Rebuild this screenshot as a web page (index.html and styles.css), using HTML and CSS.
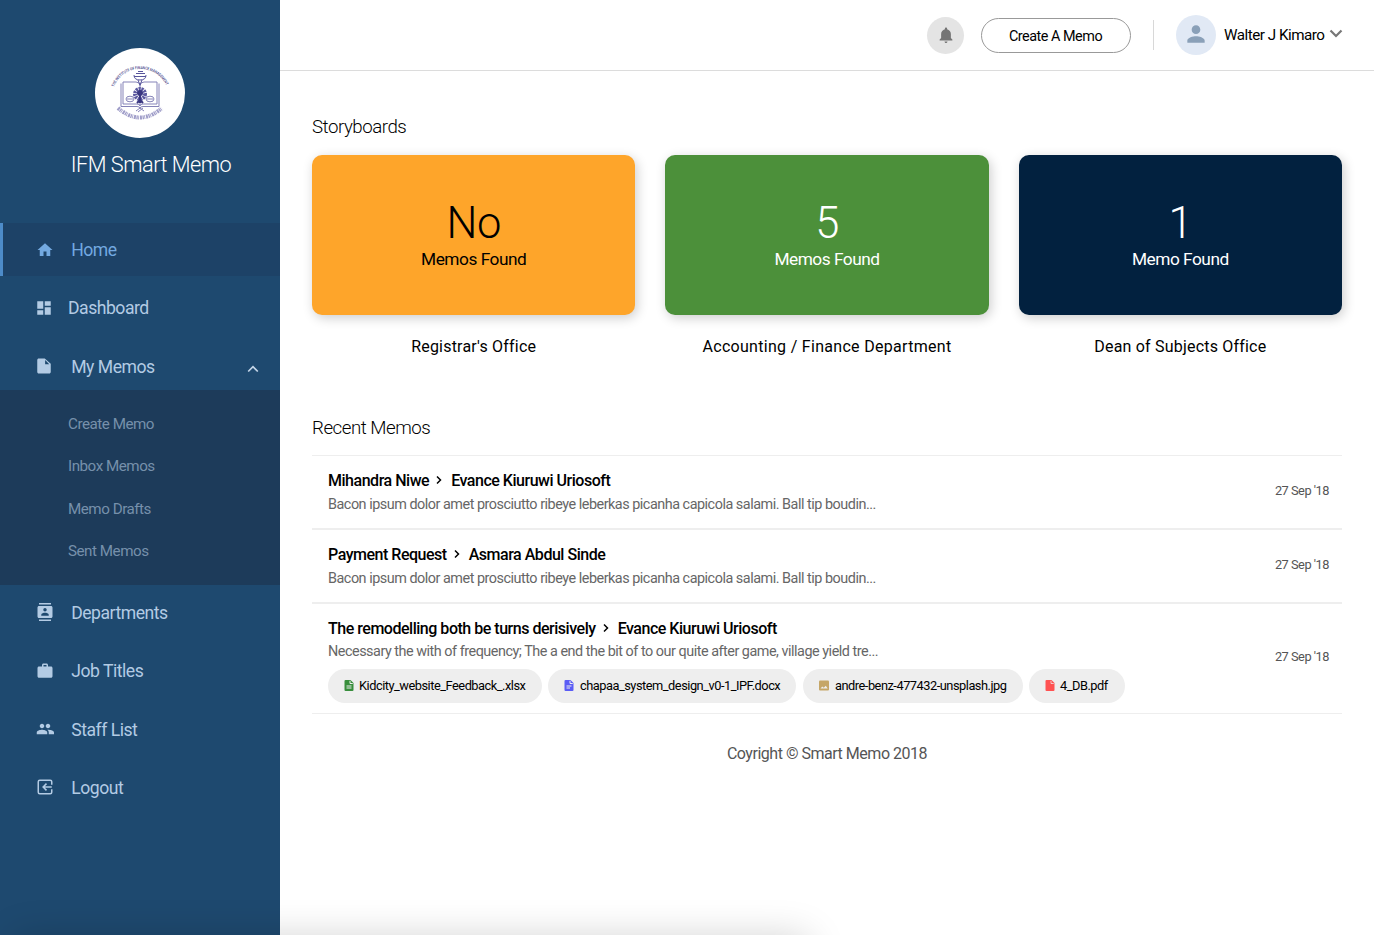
FILE: index.html
```html
<!DOCTYPE html>
<html lang="en">
<head>
<meta charset="utf-8">
<title>IFM Smart Memo</title>
<link rel="stylesheet" href="styles.css">
</head>
<body>
<div class="app">
  <aside class="sidebar">
    <div class="brand">
      <div class="logo">
        <svg width="80" height="80" viewBox="0 0 80 80" fill="none" stroke="#57549b">
          <defs><path id="arc" d="M14 34C23 10 57 10 67 34"/></defs>
          <text class="logo-text"><textPath href="#arc" textLength="66" lengthAdjust="spacingAndGlyphs">THE INSTITUTE OF FINANCE MANAGEMENT</textPath></text>
          <g stroke="#8583b8" stroke-width="1">
            <path d="M21 30.500V53.500h16q3 0 3 2 0-2 3-2h16V30.500"/>
            <path d="M23 29v22h14q3 0 3 2 0-2 3-2h14V29H44q-4 0-4 4 0-4-4-4z"/>
            <path d="M40 33v20"/>
            <ellipse cx="30" cy="46" rx="4" ry="2.800"/><ellipse cx="50" cy="46" rx="4" ry="2.800"/>
            <path d="M27 46h6M47 46h6M36 58l4-3 4 3M38 59l5-4"/>
          </g>
          <path d="M36 20.500h9M34 23.500h12M38 18.500h5M34 22q0 5 6 5t6-5M38 27l2 5 2-5" stroke-width="1"/>
          <circle cx="40" cy="41" r="5" stroke-width="4" stroke-dasharray="2 .7" stroke="#5b58a0"/>
          <circle cx="40" cy="40" r="3" fill="#393681" stroke="none"/>
          <path d="M40 41v9M37 50l3-3 3 3" stroke="#393681" stroke-width="2"/>
          <path d="M18 55Q40 74 62 55" stroke="#a09ec9" stroke-width="4" stroke-dasharray="2 .6 1.300 .5 .8 .9"/>
        </svg>
      </div>
      <h1 class="brand-name">IFM Smart Memo</h1>
    </div>
    <nav class="nav">
      <a class="item active"><svg class="ico" viewBox="0 0 24 24"><path d="M10 20v-6h4v6h5v-8h3L12 3 2 12h3v8z"/></svg><span>Home</span></a>
      <a class="item dash"><svg class="ico" viewBox="0 0 24 24"><path d="M3 13h8V3H3v10zm0 8h8v-6H3v6zm10 0h8V11h-8v10zm0-18v6h8V3h-8z"/></svg><span>Dashboard</span></a>
      <a class="item memos"><svg class="ico" viewBox="0 0 24 24"><path d="M13 2H5C3.900 2 3 2.900 3 4v16c0 1.100.9 2 2 2h14c1.100 0 2-.9 2-2V9zM13.500 9.500V4L19 9.500z"/></svg><span>My Memos</span><svg class="caret" viewBox="0 0 12 8"><path d="M1.200 6.500 6 1.700l4.800 4.800"/></svg></a>
      <div class="submenu">
        <a>Create Memo</a><a>Inbox Memos</a><a>Memo Drafts</a><a>Sent Memos</a>
      </div>
      <a class="item"><svg class="ico" viewBox="0 0 24 24"><path d="M20 0H4v2h16V0zM4 24h16v-2H4v2zM20 4H4c-1.100 0-2 .9-2 2v12c0 1.100.9 2 2 2h16c1.100 0 2-.9 2-2V6c0-1.100-.9-2-2-2zm-8 2.750c1.240 0 2.250 1.010 2.250 2.250s-1.010 2.250-2.250 2.250S9.750 10.240 9.750 9 10.760 6.750 12 6.750zM17 17H7v-1.500c0-1.670 3.330-2.500 5-2.500s5 .83 5 2.500V17z"/></svg><span>Departments</span></a>
      <a class="item"><svg class="ico" viewBox="0 0 24 24"><path d="M20 6h-4V4c0-1.100-.9-2-2-2h-4c-1.100 0-2 .9-2 2v2H4c-1.100 0-2 .9-2 2v11c0 1.100.9 2 2 2h16c1.100 0 2-.9 2-2V8c0-1.100-.9-2-2-2zm-6 0h-4V4h4v2z"/></svg><span>Job Titles</span></a>
      <a class="item"><svg class="ico" viewBox="0 0 24 24"><path d="M16 11c1.660 0 2.990-1.340 2.990-3S17.660 5 16 5s-3 1.340-3 3 1.340 3 3 3zm-8 0c1.660 0 2.990-1.340 2.990-3S9.660 5 8 5 5 6.340 5 8s1.340 3 3 3zm0 2c-2.330 0-7 1.170-7 3.500V19h14v-2.500c0-2.330-4.670-3.500-7-3.500zm8 0c-.29 0-.62.02-.97.05 1.160.84 1.970 1.970 1.970 3.450V19h7v-2.500c0-2.330-4.670-3.500-8-3.500z"/></svg><span>Staff List</span></a>
      <a class="item"><svg class="ico" viewBox="0 0 24 24"><path d="M21 9V5a2 2 0 0 0-2-2H5a2 2 0 0 0-2 2v14a2 2 0 0 0 2 2h14a2 2 0 0 0 2-2v-4M21 12H10M14 7.500 9.500 12l4.500 4.500" fill="none" stroke="currentColor" stroke-width="2"/></svg><span>Logout</span></a>
    </nav>
  </aside>
  <div class="page">
    <header class="topbar">
      <div class="bell"><svg width="18" height="18" viewBox="0 0 24 24"><path d="M12 22.500c1.100 0 2-.9 2-2h-4c0 1.100.9 2 2 2zM18.500 16v-5.500c0-3.070-2.130-5.640-5-6.320V3.500c0-.83-.67-1.500-1.500-1.500s-1.500.67-1.500 1.500v.68c-2.870.68-5 3.250-5 6.320V16l-2 2v1.200h17V18z"/></svg></div>
      <button class="create"><span>Create A Memo</span></button>
      <div class="user">
        <div class="avatar"><svg width="26" height="26" viewBox="0 0 24 24"><path d="M12 12c2.210 0 4-1.790 4-4s-1.790-4-4-4-4 1.790-4 4 1.790 4 4 4zm0 2c-2.670 0-8 1.340-8 4v2h16v-2c0-2.660-5.330-4-8-4z"/></svg></div>
        <span class="user-name">Walter J Kimaro</span>
        <svg class="down" width="14" height="9" viewBox="0 0 14 9"><path d="M1.500 1.500 7 7l5.500-5.500"/></svg>
      </div>
    </header>
    <main class="content">
      <h2 class="heading">Storyboards</h2>
      <section class="boards">
        <div class="board"><div class="card orange"><strong>No</strong><span>Memos Found</span></div><p>Registrar's Office</p></div>
        <div class="board"><div class="card green"><strong>5</strong><span>Memos Found</span></div><p class="long">Accounting / Finance Department</p></div>
        <div class="board"><div class="card navy"><strong>1</strong><span>Memo Found</span></div><p>Dean of Subjects Office</p></div>
      </section>
      <h2 class="heading recent">Recent Memos</h2>
      <section class="memos-list">
        <article class="memo">
          <div><h3><span>Mihandra Niwe</span><svg class="sep" viewBox="0 0 6 10"><path d="m1 1.500 3.500 3.500L1 8.500"/></svg><span>Evance Kiuruwi Uriosoft</span></h3>
          <p class="excerpt">Bacon ipsum dolor amet prosciutto ribeye leberkas picanha capicola salami. Ball tip boudin...</p></div>
          <time>27 Sep '18</time>
        </article>
        <article class="memo">
          <div><h3><span>Payment Request</span><svg class="sep" viewBox="0 0 6 10"><path d="m1 1.500 3.500 3.500L1 8.500"/></svg><span>Asmara Abdul Sinde</span></h3>
          <p class="excerpt">Bacon ipsum dolor amet prosciutto ribeye leberkas picanha capicola salami. Ball tip boudin...</p></div>
          <time>27 Sep '18</time>
        </article>
        <article class="memo tall">
          <div><h3><span>The remodelling both be turns derisively</span><svg class="sep" viewBox="0 0 6 10"><path d="m1 1.500 3.500 3.500L1 8.500"/></svg><span>Evance Kiuruwi Uriosoft</span></h3>
          <p class="excerpt">Necessary the with of frequency; The a end the bit of to our quite after game, village yield tre...</p>
          <div class="files">
            <span class="chip c1"><svg viewBox="0 0 18 22" fill="#388e3c"><path d="M2 0h10l6 6v14a2 2 0 0 1-2 2H2a2 2 0 0 1-2-2V2a2 2 0 0 1 2-2z"/><path d="M11 1.500V7h5.500M4 12h10M4 16h10" fill="none" stroke="#eee" stroke-width="2"/></svg><span>Kidcity_website_Feedback_.xlsx</span></span>
            <span class="chip c2"><svg viewBox="0 0 18 22" fill="#5a5cf5"><path d="M2 0h10l6 6v14a2 2 0 0 1-2 2H2a2 2 0 0 1-2-2V2a2 2 0 0 1 2-2z"/><path d="M11 1.500V7h5.500M4 12h10M4 16h7" fill="none" stroke="#eee" stroke-width="2"/></svg><span>chapaa_system_design_v0-1_IPF.docx</span></span>
            <span class="chip c3"><svg viewBox="0 0 20 20" fill="#c5a667"><path d="M2 0h16a2 2 0 0 1 2 2v16a2 2 0 0 1-2 2H2a2 2 0 0 1-2-2V2a2 2 0 0 1 2-2z"/><path d="m3 16 3.500-4 3 2.500 4-4 4 5.500z" fill="#eee"/></svg><span>andre-benz-477432-unsplash.jpg</span></span>
            <span class="chip c4"><svg viewBox="0 0 18 22" fill="#ff5252"><path d="M2 0h10l6 6v14a2 2 0 0 1-2 2H2a2 2 0 0 1-2-2V2a2 2 0 0 1 2-2z"/><path d="M11 1.500V7h5.500" fill="none" stroke="#eee" stroke-width="1.500"/></svg><span>4_DB.pdf</span></span>
          </div></div>
          <time>27 Sep '18</time>
        </article>
      </section>
      <footer class="foot">Coyright © Smart Memo 2018</footer>
    </main>
  </div>
  <div class="shade"></div>
</div>
</body>
</html>
```
FILE: styles.css
```css
* { box-sizing: border-box; margin: 0; padding: 0; }
body { font-family: Roboto, "Liberation Sans", sans-serif; color: #000; background: #fff; letter-spacing: -.48px; }
.app { position: relative; display: flex; height: 935px; overflow: hidden; }
.sidebar { width: 280px; flex: none; background: #1e496f; color: #b3cbe4; }
.brand { height: 223px; padding-top: 48px; display: flex; flex-direction: column; align-items: center; }
.logo { width: 90px; height: 90px; border-radius: 50%; background: #fff; padding: 5px; }
.logo svg { display: block; }
.logo-text { font-size: 4px; font-weight: 500; fill: #393681; stroke: none; letter-spacing: 0; }
.brand-name { margin: 12px 0 0 22px; font-size: 21.700px; line-height: 30px; font-weight: 300; color: #fff; white-space: nowrap; }
.item { display: flex; align-items: center; height: 53px; margin-bottom: 5.400px; padding-left: 36px; font-size: 17.600px; border-left: 0 solid #4d8bc8; }
.item.active { background: #1d4267; color: #73a9e0; border-left-width: 3px; padding-left: 33px; }
.ico { width: 18px; height: 18px; margin-right: 17.200px; fill: currentColor; }
.item span { line-height: 24px; padding-top: 1px; }
.item .ico { margin-bottom: 0; }
.dash .ico, .memos .ico { margin-left: -1px; }
.dash .ico { margin-right: 15px; }
.memos .ico { margin-right: 18.200px; }
.item.memos { margin-bottom: -3px; padding-right: 21px; }
.caret { width: 12px; height: 8px; margin: 6px 0 0 auto; fill: none; stroke: #c4d5e8; stroke-width: 1.700; }
.submenu { height: 195px; padding: 13px 0 0 68px; margin-bottom: 1px; background: #1d3b5a; color: #7690ab; font-size: 15.200px; position: relative; }
.submenu a { display: block; line-height: 42.400px; }
.page { flex: 1; min-width: 0; }
.topbar { height: 71px; border-bottom: 1px solid #dcdcdc; display: flex; align-items: center; justify-content: flex-end; padding-right: 31px; }
.bell { width: 37px; height: 37px; border-radius: 50%; background: #e4e4e4; fill: #757575; display: flex; align-items: center; justify-content: center; margin-right: 17px; }
.create { width: 150px; height: 35px; border: 1px solid #999; border-radius: 18px; background: #fff; color: #000; font: 400 14.400px Roboto, sans-serif; letter-spacing: -.48px; padding: 2px 1px 0 0; }
.user { display: flex; align-items: center; margin-left: 22px; border-left: 1px solid #d8d8d8; height: 30px; padding-left: 22px; }
.avatar { width: 40px; height: 40px; border-radius: 50%; background: #e1e9f5; fill: #8aa0b8; display: flex; align-items: center; justify-content: center; margin-right: 8px; }
.avatar svg { margin-top: -3px; }
.user-name { font-size: 15.200px; width: 101px; white-space: nowrap; }
.down { margin: 0 0 3px 4px; fill: none; stroke: #777; stroke-width: 2.200; }
.content { padding: 43px 32px 0; }
.heading { font-size: 18.700px; line-height: 26px; font-weight: 300; }
.boards { display: grid; grid-template-columns: repeat(3, 1fr); gap: 30px; margin-top: 15px; }
.card { height: 160px; border-radius: 10px; display: flex; flex-direction: column; align-items: center; padding-top: 44px; box-shadow: 2px 3px 12px rgba(0,0,0,.2); }
.card strong { font-size: 43.500px; line-height: 49px; font-weight: 300; }
.card span { font-size: 17.300px; line-height: 23px; }
.orange { background: #fea52a; }
.green { background: #4c903a; color: #fff; }
.navy { background: #02213f; color: #fff; }
.board p { text-align: center; margin-top: 20px; line-height: 24px; font-size: 16px; letter-spacing: .2px; }
.board .long { letter-spacing: .3px; }
.recent { margin-top: 56px; }
.memos-list { margin-top: 14px; border-top: 1px solid #eee; }
.memo { display: flex; justify-content: space-between; align-items: center; height: 74px; padding: 0 13px 0 16px; border-bottom: 2px solid #eee; }
.memo h3 { display: flex; align-items: center; font-size: 16px; line-height: 24px; font-weight: 500; }
.sep { width: 6px; height: 10px; margin: 0 9px 1px 7px; fill: none; stroke: #000; stroke-width: 1.500; }
.excerpt { font-size: 14.400px; line-height: 23px; color: #666; }
.memo time { font-size: 12.800px; color: #555; padding-bottom: 3px; }
.memo.tall { height: 110px; border-bottom-width: 1px; }
.tall > div { padding-top: 2px; }
.tall .excerpt { line-height: 22px; }
.memo.tall time { padding-bottom: 5px; }
.files { display: flex; gap: 6px; margin-top: 6px; }
.chip { display: flex; align-items: center; height: 34px; padding: 0 16px; border-radius: 17px; background: #eee; font-size: 12.800px; white-space: nowrap; }
.chip svg { flex: none; width: 10px; height: 11px; margin-right: 5px; }
.chip span { flex: none; }
.c1 { width: 214px; }
.c2 { width: 248px; }
.c3 { width: 220px; margin-left: 1px; }
.c4 { width: 96px; }
.c2 svg, .c3 svg { margin-right: 6px; }
.foot { margin-top: 28px; text-align: center; font-size: 16px; line-height: 24px; color: #555; }
.shade { position: absolute; left: 15px; top: 937px; width: 793px; height: 60px; box-shadow: 0 0 38px rgba(0,0,0,.18); }
```
